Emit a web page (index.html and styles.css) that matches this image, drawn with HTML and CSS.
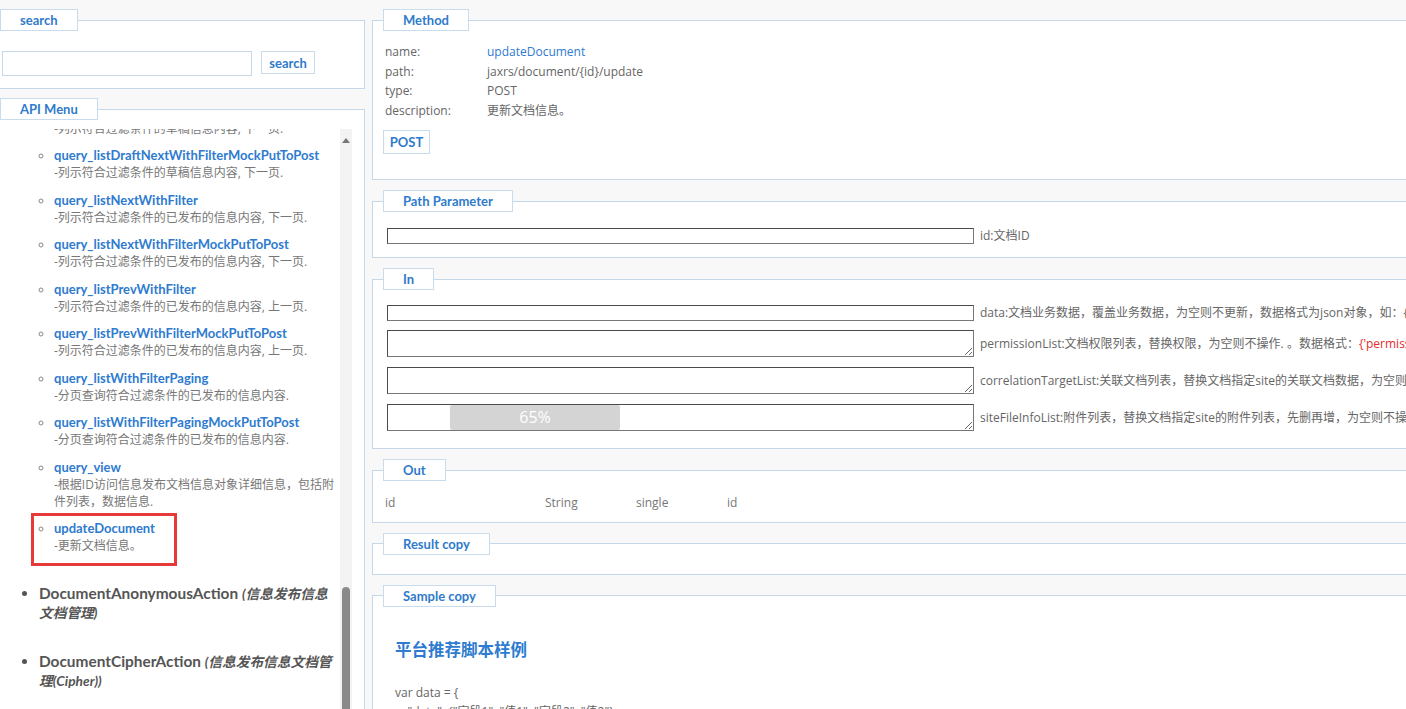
FILE: index.html
```html
<!DOCTYPE html>
<html lang="zh-CN">
<head>
<meta charset="utf-8">
<title>API</title>
<link rel="stylesheet" href="styles.css">
</head>
<body>
<div class="page">
  <aside class="side">
    <fieldset class="box search-box">
      <legend>search</legend>
      <div class="search-row">
        <input class="search-input" type="text">
        <button class="btn search-btn" type="button">search</button>
      </div>
    </fieldset>
    <fieldset class="box menu-box">
      <legend>API Menu</legend>
      <div class="menu-body">
        <div class="menu-view">
          <ul class="groups">
            <li class="group">
              <ul class="methods">
                <li><a class="m-name" href="#">query_listDraftNextWithFilter</a><span class="m-desc">-列示符合过滤条件的草稿信息内容, 下一页.</span></li>
                <li><a class="m-name" href="#">query_listDraftNextWithFilterMockPutToPost</a><span class="m-desc">-列示符合过滤条件的草稿信息内容, 下一页.</span></li>
                <li><a class="m-name" href="#">query_listNextWithFilter</a><span class="m-desc">-列示符合过滤条件的已发布的信息内容, 下一页.</span></li>
                <li><a class="m-name" href="#">query_listNextWithFilterMockPutToPost</a><span class="m-desc">-列示符合过滤条件的已发布的信息内容, 下一页.</span></li>
                <li><a class="m-name" href="#">query_listPrevWithFilter</a><span class="m-desc">-列示符合过滤条件的已发布的信息内容, 上一页.</span></li>
                <li><a class="m-name" href="#">query_listPrevWithFilterMockPutToPost</a><span class="m-desc">-列示符合过滤条件的已发布的信息内容, 上一页.</span></li>
                <li><a class="m-name" href="#">query_listWithFilterPaging</a><span class="m-desc">-分页查询符合过滤条件的已发布的信息内容.</span></li>
                <li><a class="m-name" href="#">query_listWithFilterPagingMockPutToPost</a><span class="m-desc">-分页查询符合过滤条件的已发布的信息内容.</span></li>
                <li><a class="m-name" href="#">query_view</a><span class="m-desc">-根据ID访问信息发布文档信息对象详细信息，包括附件列表，数据信息.</span></li>
                <li class="marked"><a class="m-name" href="#">updateDocument</a><span class="m-desc">-更新文档信息。</span></li>
              </ul>
            </li>
            <li class="group"><span class="g-name">DocumentAnonymousAction</span> <em class="g-note">(信息发布信息文档管理)</em></li>
            <li class="group"><span class="g-name">DocumentCipherAction</span> <em class="g-note">(信息发布信息文档管理(Cipher))</em></li>
            <li class="group"><span class="g-name">DocumentCommendAction</span> <em class="g-note">(文档点赞管理)</em></li>
          </ul>
        </div>
        <div class="scrollbar"><span class="sb-arrow"></span><span class="sb-thumb"></span></div>
      </div>
    </fieldset>
  </aside>

  <main class="main">
    <fieldset class="box method-box">
      <legend>Method</legend>
      <div class="kv">
        <div class="kv-row"><span class="kv-key">name:</span><span class="kv-val link">updateDocument</span></div>
        <div class="kv-row"><span class="kv-key">path:</span><span class="kv-val">jaxrs/document/{id}/update</span></div>
        <div class="kv-row"><span class="kv-key">type:</span><span class="kv-val">POST</span></div>
        <div class="kv-row"><span class="kv-key">description:</span><span class="kv-val">更新文档信息。</span></div>
      </div>
      <button class="btn post-btn" type="button">POST</button>
    </fieldset>

    <fieldset class="box path-box">
      <legend>Path Parameter</legend>
      <div class="param-row input-row"><input class="param-input" type="text"><span class="param-label">id:文档ID</span></div>
    </fieldset>

    <fieldset class="box in-box">
      <legend>In</legend>
      <div class="param-row input-row"><input class="param-input" type="text"><span class="param-label">data:文档业务数据，覆盖业务数据，为空则不更新，数据格式为json对象，如：{"subject":"标题","docStatus":"published"}</span></div>
      <div class="param-row area-row"><textarea class="param-area"></textarea><span class="param-label">permissionList:文档权限列表，替换权限，为空则不操作. 。数据格式：<span class="red">{'permissionObjectType':'组织', 'permissionObjectCode':'组织全称', 'permissionObjectName':'组织名称', 'permission':'读者|阅读者'}</span></span></div>
      <div class="param-row area-row"><textarea class="param-area"></textarea><span class="param-label">correlationTargetList:关联文档列表，替换文档指定site的关联文档数据，为空则不操作。</span></div>
      <div class="param-row area-row progress-row"><textarea class="param-area"></textarea><span class="progress">65%</span><span class="param-label">siteFileInfoList:附件列表，替换文档指定site的附件列表，先删再增，为空则不操作。</span></div>
    </fieldset>

    <fieldset class="box out-box">
      <legend>Out</legend>
      <div class="out-row"><span>id</span><span>String</span><span>single</span><span>id</span></div>
    </fieldset>

    <fieldset class="box result-box">
      <legend>Result copy</legend>
    </fieldset>

    <fieldset class="box sample-box">
      <legend>Sample copy</legend>
      <h2 class="sample-title">平台推荐脚本样例</h2>
      <div class="code">var data = {
    "data": {"字段1": "值1", "字段2": "值2"},
    "permissionList": []
};</div>
    </fieldset>
  </main>
</div>
</body>
</html>
```

FILE: styles.css
```css
* { box-sizing: border-box; }
html, body { margin: 0; height: 100%; }
body {
  background: #f8f8f8;
  font-family: "Open Sans", "Noto Sans CJK SC", sans-serif;
  font-size: 12px;
  color: #666;
  overflow: hidden;
}
.page {
  display: flex;
  align-items: flex-start;
  padding-top: 9px;
  width: 1700px;
}
.side { width: 365px; flex: none; }
.main { margin-left: 7px; width: 1240px; flex: none; }

.box {
  margin: 0;
  border: 1px solid #c5d8e9;
  background: #fff;
  padding: 0 12px 0 10px;
  min-width: 0;
}
.box + .box { margin-top: 10px; }
.box > legend {
  font-family: "Lato", "Noto Sans CJK SC", sans-serif;
  font-weight: 700;
  font-size: 13px;
  color: #2f7bcb;
  border: 1px solid #c9dced;
  background: #fff;
  line-height: 20px;
  padding: 0 19px;
  margin: 0;
}
.side .box { margin-left: -11px; width: 376px; }
.side .box + .box { margin-top: 9px; }

.btn {
  font-family: "Lato", "Noto Sans CJK SC", sans-serif;
  font-weight: 700;
  font-size: 13px;
  color: #2f7bcb;
  background: #fff;
  border: 1px solid #c9dced;
  padding: 0;
  margin: 0;
  cursor: pointer;
}

/* search */
.search-box { padding-top: 20px; padding-bottom: 12px; }
.search-row { display: flex; align-items: flex-start; margin-left: 2px; }
.search-input {
  width: 250px;
  height: 25px;
  border: 1px solid #c5d9eb;
  margin: 0;
  padding: 0 4px;
  background: #fff;
}
.search-btn { width: 54px; height: 23px; margin-left: 9px; }

/* menu */
.menu-box { padding-top: 9px; padding-bottom: 0; }
.menu-body { display: flex; height: 640px; }
.menu-view { flex: 1; min-width: 0; overflow: hidden; }
.groups {
  margin: 0;
  padding: 0 0 0 39px;
  list-style: disc;
  color: #555;
}
.group {
  margin-bottom: 30px;
  font-family: "Lato", "Noto Sans CJK SC", sans-serif;
  font-weight: 700;
  font-size: 15.4px;
  line-height: 18px;
  color: #555;
}
.g-note { font-style: italic; font-size: 13.7px; }
.methods {
  margin: -28.5px 0 0;
  padding: 0 0 0 15px;
  list-style: circle;
  font-family: "Open Sans", "Noto Sans CJK SC", sans-serif;
  font-weight: 400;
  font-size: 12px;
  line-height: 17px;
}
.methods li { margin-bottom: 10.5px; color: #888; }
.m-name {
  display: block;
  font-family: "Lato", "Noto Sans CJK SC", sans-serif;
  font-weight: 700;
  font-size: 13px;
  color: #2e7bcf;
  text-decoration: none;
}
.m-desc { display: block; color: #777; }
.marked { position: relative; }
.marked::after {
  content: "";
  position: absolute;
  left: -23px;
  top: -7.5px;
  width: 140px;
  height: 47px;
  border: 3px solid #e63a3a;
}
.scrollbar {
  width: 12px;
  flex: none;
  background: #f3f3f3;
  display: flex;
  flex-direction: column;
  align-items: center;
  padding-top: 9px;
}
.sb-arrow {
  width: 0;
  height: 0;
  border-left: 4.5px solid transparent;
  border-right: 4.5px solid transparent;
  border-bottom: 5px solid #777;
}
.sb-thumb {
  width: 8px;
  height: 200px;
  margin-top: 444px;
  background: #8a8a8a;
  border-radius: 4px;
}

/* method */
.method-box { padding-top: 11px; padding-bottom: 25px; }
.kv { padding-left: 2px; }
.kv-row { display: flex; line-height: 19.5px; }
.kv-key { width: 102px; flex: none; color: #666; }
.kv-val { color: #666; }
.kv-val.link { color: #2e7bcf; }
.post-btn { display: block; margin-top: 10px; width: 47px; height: 24px; }

/* params */
.path-box { padding-top: 16px; padding-bottom: 13px; }
.in-box { padding-top: 15px; padding-bottom: 17px; }
.param-row {
  display: flex;
  align-items: center;
  gap: 6px;
  margin-left: 4px;
  white-space: nowrap;
  line-height: 16px;
}
.area-row { margin-top: 10px; }
.input-row + .area-row { margin-top: 9px; }
.param-input {
  width: 587px;
  height: 16px;
  flex: none;
  margin: 0;
  padding: 0;
  border: 1px solid #4a4a4a;
  border-bottom-color: #777;
  border-right-color: #777;
  background: #fff;
}
.param-area {
  width: 587px;
  height: 27px;
  flex: none;
  margin: 0;
  padding: 0;
  border: 1px solid #4a4a4a;
  border-bottom-color: #777;
  border-right-color: #777;
  background: #fff;
  font: inherit;
}
.param-label { color: #666; }
.red { color: #e52b2b; }
.progress-row { position: relative; }
.progress {
  position: absolute;
  left: 63px;
  top: 1px;
  width: 170px;
  height: 25px;
  background: #d4d4d4;
  border-radius: 2px;
  color: #fff;
  font-size: 16px;
  line-height: 25px;
  text-align: center;
}

/* out */
.out-box { padding-top: 12px; padding-bottom: 9px; }
.out-row {
  display: grid;
  grid-template-columns: 160px 91px 91px auto;
  padding-left: 2px;
  line-height: 19.5px;
  color: #777;
}

.result-box { padding-top: 10px; padding-bottom: 9px; }

/* sample */
.sample-box { padding-top: 30px; padding-bottom: 20px; }
.sample-title {
  margin: 0;
  padding-left: 12px;
  font-family: "Noto Sans CJK SC", sans-serif;
  font-weight: 700;
  font-size: 16.5px;
  line-height: 24px;
  color: #2e7bcf;
}
.code {
  margin-top: 22px;
  padding-left: 12px;
  white-space: pre;
  line-height: 19.5px;
  color: #666;
}
```
